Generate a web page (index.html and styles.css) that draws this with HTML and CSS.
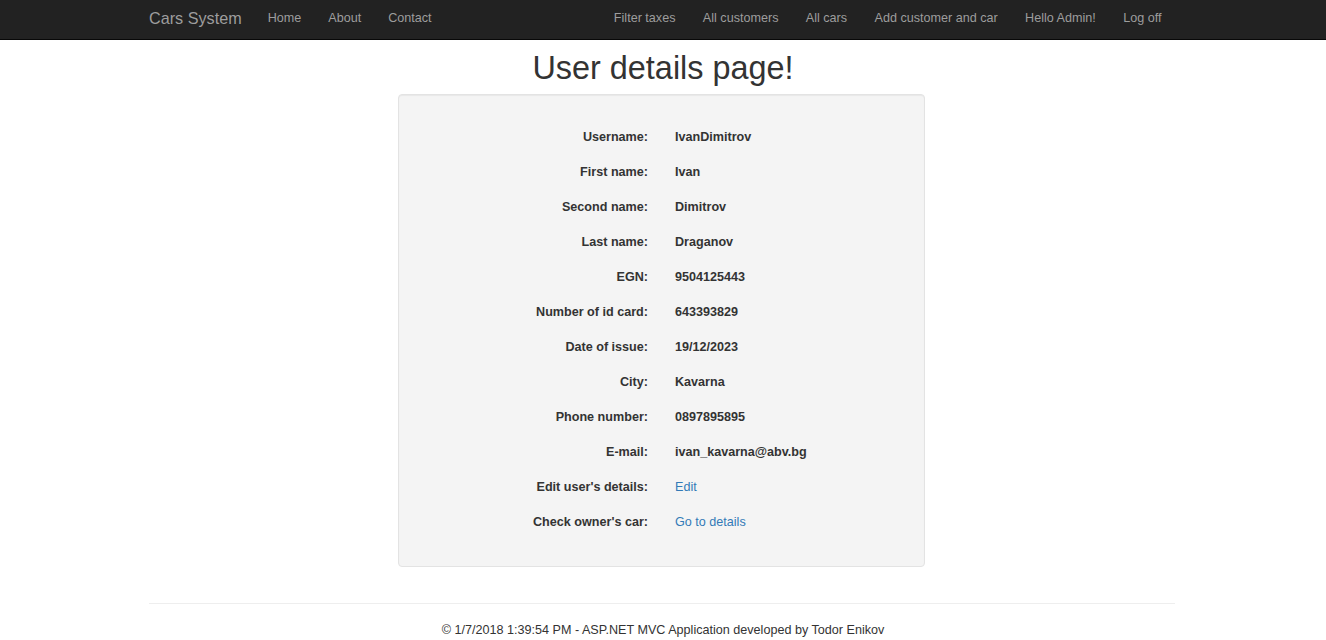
FILE: index.html
```html
<!DOCTYPE html>
<html lang="en">
<head>
<meta charset="utf-8">
<title>User details - Cars System</title>
<link rel="stylesheet" href="styles.css">
</head>
<body>
<header class="navbar">
  <div class="container nav-inner">
    <a class="brand" href="#">Cars System</a>
    <nav class="nav nav-left">
      <a href="#">Home</a>
      <a href="#">About</a>
      <a href="#">Contact</a>
    </nav>
    <nav class="nav nav-right">
      <a href="#">Filter taxes</a>
      <a href="#">All customers</a>
      <a href="#">All cars</a>
      <a href="#">Add customer and car</a>
      <a href="#">Hello Admin!</a>
      <a href="#">Log off</a>
    </nav>
  </div>
</header>

<main class="container">
  <h1 class="title">User details page!</h1>
  <section class="well">
    <div class="details">
      <div class="label">Username:</div><div class="value">IvanDimitrov</div>
      <div class="label">First name:</div><div class="value">Ivan</div>
      <div class="label">Second name:</div><div class="value">Dimitrov</div>
      <div class="label">Last name:</div><div class="value">Draganov</div>
      <div class="label">EGN:</div><div class="value">9504125443</div>
      <div class="label">Number of id card:</div><div class="value">643393829</div>
      <div class="label">Date of issue:</div><div class="value">19/12/2023</div>
      <div class="label">City:</div><div class="value">Kavarna</div>
      <div class="label">Phone number:</div><div class="value">0897895895</div>
      <div class="label">E-mail:</div><div class="value">ivan_kavarna@abv.bg</div>
      <div class="label">Edit user's details:</div><div class="value"><a href="#">Edit</a></div>
      <div class="label">Check owner's car:</div><div class="value"><a href="#">Go to details</a></div>
    </div>
  </section>
  <hr class="rule">
  <footer class="footer">
    <p>&copy; 1/7/2018 1:39:54 PM - ASP.NET MVC Application developed by Todor Enikov</p>
  </footer>
</main>
</body>
</html>
```

FILE: styles.css
```css
html, body {
  margin: 0;
  padding: 0;
  overflow: hidden;
}
body {
  font-family: "Liberation Sans", Arial, Helvetica, sans-serif;
  font-size: 12.6px;
  line-height: 18px;
  color: #333;
  background: #fff;
}
a {
  text-decoration: none;
}
.container {
  width: 1028px;
  margin: 0 auto;
}
.navbar {
  background: #222;
  border-bottom: 1px solid #080808;
  height: 39px;
}
.nav-inner {
  display: flex;
  align-items: flex-start;
  height: 39px;
}
.brand {
  color: #9d9d9d;
  font-size: 16.2px;
  line-height: 18px;
  padding-top: 8.5px;
  margin-right: 26px;
}
.nav {
  display: flex;
  gap: 27px;
  padding-top: 9px;
}
.nav a {
  color: #9d9d9d;
  line-height: 18px;
}
.nav-right {
  margin-left: auto;
  margin-right: 15.5px;
  gap: 27.4px;
}
.title {
  font-size: 32.4px;
  font-weight: 500;
  line-height: 35.64px;
  text-align: center;
  margin: 11px 0 7.4px;
  color: #333;
}
.well {
  width: 525px;
  margin-left: 249px;
  background: #f4f4f4;
  border: 1px solid #e3e3e3;
  border-radius: 4px;
  box-shadow: inset 0 1px 1px rgba(0,0,0,.05);
  padding: 25.4px 0 25.6px;
}
.details {
  display: grid;
  grid-template-columns: 249px 1fr;
  column-gap: 27px;
}
.label, .value {
  line-height: 35px;
  font-weight: bold;
  white-space: nowrap;
}
.label {
  text-align: right;
}
.value a {
  color: #337ab7;
  font-weight: normal;
}
.rule {
  border: 0;
  border-top: 1px solid #eee;
  margin: 36px 0 0;
  width: 1026px;
}
.footer p {
  margin: 17px 0 0;
  text-align: center;
}
```
